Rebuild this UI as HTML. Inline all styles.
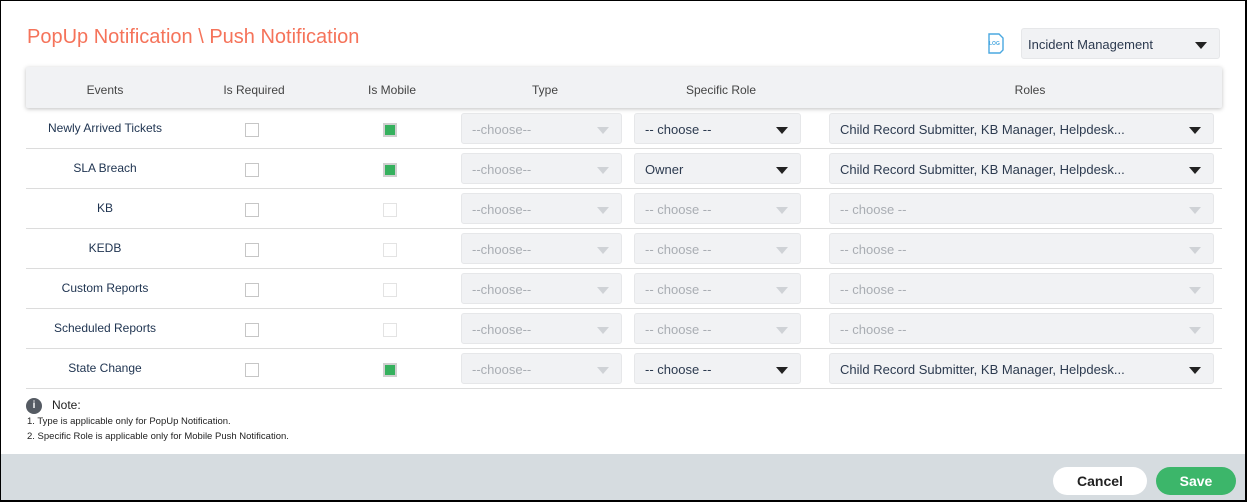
<!DOCTYPE html>
<html><head><meta charset="utf-8"><style>
*{box-sizing:border-box;margin:0;padding:0}
body{width:1247px;height:502px;position:relative;font-family:"Liberation Sans",sans-serif;background:#fff;overflow:hidden}
.frame{position:absolute;left:0;top:0;width:1247px;height:502px;border:1px solid #000;border-right-width:2px;border-bottom-width:2px}
.abs{position:absolute}
.title{left:27px;top:26px;font-size:20px;color:#f5735a}
.hdr{left:26px;top:67px;width:1196px;height:41px;background:#f1f2f4;box-shadow:0 1px 4px rgba(0,0,0,.25);border-radius:2px}
.hdr span{position:absolute;top:16px;font-size:12px;color:#444;transform:translateX(-50%)}
.cell{font-size:12px;color:#1e3350;transform:translateX(-50%);white-space:nowrap}
.line{left:26px;width:1196px;height:1px;background:#dcdcdc}
.cb{width:14px;height:14px;border:1px solid #c6c6c6;background:#fff}
.cb.on{background:#35b15e;border:2px solid #d0d0d0}
.cb.dis{border-color:#e3e3e3}
.sel{height:31px;background:#f1f2f4;border:1px solid #e6e7e9;border-radius:3px;font-size:13px;padding:8px 10px;color:#2c3a4f;white-space:nowrap}
.sel.dis{color:#a9adb3}
.sel:after{content:"";position:absolute;right:12px;top:13px;border-left:6px solid transparent;border-right:6px solid transparent;border-top:7px solid #222}
.sel.dis:after{border-top-color:#cfd2d6}
.foot{left:1px;top:454px;width:1245px;height:47px;background:#d6dce0}
.btn{top:467px;height:28px;border-radius:14px;font-weight:bold;font-size:14px;text-align:center;line-height:28px}
</style></head><body>
<div class="abs title">PopUp Notification \ Push Notification</div>
<svg class="abs" style="left:985px;top:32px" width="22" height="22" viewBox="0 0 22 22"><path d="M4 2h10l4 4v12l-3 3H4z" fill="none" stroke="#4aa8e0" stroke-width="1.4"/><text x="4" y="13" font-size="5" fill="#4aa8e0" font-family="Liberation Sans" font-weight="bold">LOG</text></svg>
<div class="abs sel" style="left:1021px;top:28px;width:199px;height:31px;padding-left:6px">Incident Management</div>
<div class="abs hdr"><span style="left:79px">Events</span><span style="left:228px">Is Required</span><span style="left:366px">Is Mobile</span><span style="left:519px">Type</span><span style="left:695px">Specific Role</span><span style="left:1004px">Roles</span></div>
<div id="rows"></div>
<div class="abs" style="left:26px;top:398px;width:16px;height:16px;border-radius:50%;background:#555b63;color:#fff;font-size:10px;text-align:center;line-height:16px;font-weight:bold">i</div>
<div class="abs" style="left:52px;top:398px;font-size:12px;color:#222">Note:</div>
<div class="abs" style="left:27px;top:416px;font-size:9.5px;color:#222">1. Type is applicable only for PopUp Notification.</div>
<div class="abs" style="left:27px;top:431px;font-size:9.5px;color:#222">2. Specific Role is applicable only for Mobile Push Notification.</div>
<div class="abs foot"></div>
<div class="abs btn" style="left:1053px;width:94px;background:#fff;color:#222">Cancel</div>
<div class="abs btn" style="left:1156px;width:80px;background:#3cb66a;color:#fff">Save</div>
<div class="frame"></div>
<script>
var rows=[["Newly Arrived Tickets",1,"-- choose --",1,"Child Record Submitter, KB Manager, Helpdesk...",1],
["SLA Breach",1,"Owner",1,"Child Record Submitter, KB Manager, Helpdesk...",1],
["KB",0,"-- choose --",0,"-- choose --",0],
["KEDB",0,"-- choose --",0,"-- choose --",0],
["Custom Reports",0,"-- choose --",0,"-- choose --",0],
["Scheduled Reports",0,"-- choose --",0,"-- choose --",0],
["State Change",1,"-- choose --",1,"Child Record Submitter, KB Manager, Helpdesk...",1]];
var h="";
rows.forEach(function(r,i){var y=108+i*40;
h+='<div class="abs cell" style="left:105px;top:'+(y+13)+'px">'+r[0]+'</div>';
h+='<div class="abs cb" style="left:245px;top:'+(y+15)+'px"></div>';
h+='<div class="abs cb '+(r[1]?'on':'dis')+'" style="left:383px;top:'+(y+15)+'px"></div>';
h+='<div class="abs sel dis" style="left:461px;top:'+(y+5)+'px;width:161px">--choose--</div>';
h+='<div class="abs sel'+(r[3]?'':' dis')+'" style="left:634px;top:'+(y+5)+'px;width:167px">'+r[2]+'</div>';
h+='<div class="abs sel'+(r[5]?'':' dis')+'" style="left:829px;top:'+(y+5)+'px;width:385px">'+r[4]+'</div>';
h+='<div class="abs line" style="top:'+(y+40)+'px"></div>';});
document.getElementById("rows").innerHTML=h;
</script>
</body></html>
